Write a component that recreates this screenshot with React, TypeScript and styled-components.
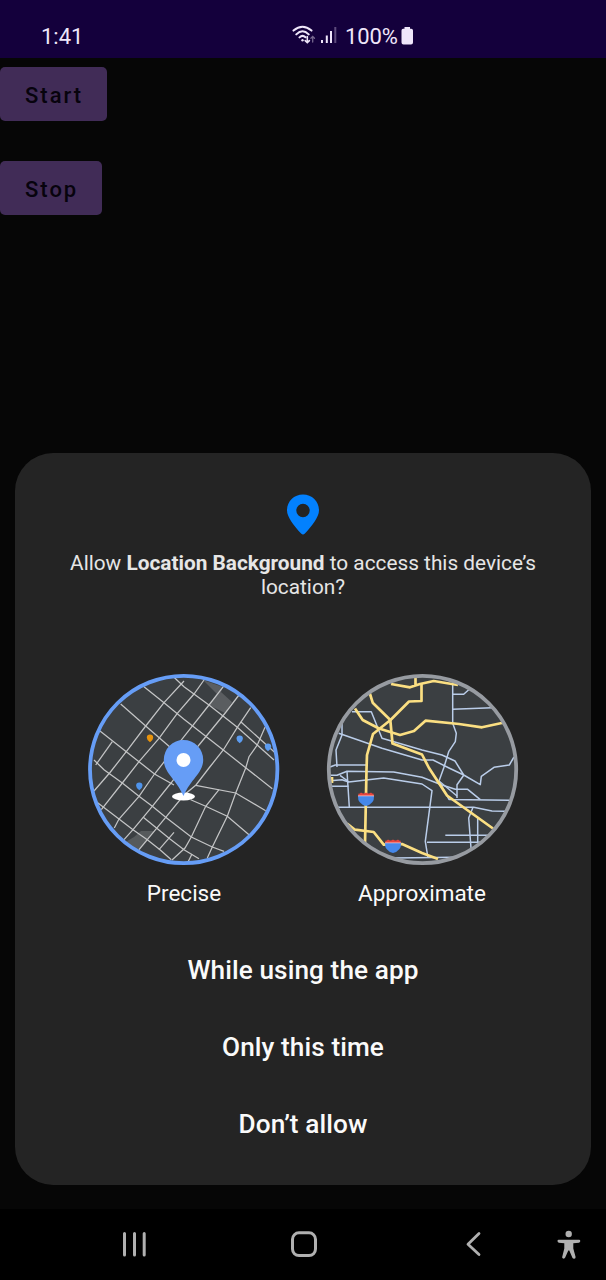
import React from 'react';
import styled, { createGlobalStyle } from 'styled-components';

const GlobalStyle = createGlobalStyle`
  * { box-sizing: border-box; }
  body { margin: 0; background: #060606; font-family: Roboto, "Liberation Sans", sans-serif; }
  svg { display: block; flex: none; }
`;

const Screen = styled.div`
  width: 606px;
  height: 1280px;
  display: flex;
  flex-direction: column;
  background: #060606;
  overflow: hidden;
`;

const StatusBar = styled.header`
  height: 58px;
  flex: none;
  display: flex;
  padding: 23px 0 0 41px;
  background: #14003c;
  color: #efe6fa;
  font-size: 22px;
  line-height: 27px;
`;

const Clock = styled.span`
  width: 251px;
`;

const StatusIcons = styled.div`
  display: flex;
  align-items: flex-start;
`;

const BatteryText = styled.span`
  margin: 0 1px 0 7px;
  width: 55px;
  letter-spacing: -0.1px;
`;

const AppArea = styled.main`
  height: 395px;
  flex: none;
  display: flex;
  flex-direction: column;
  align-items: flex-start;
  gap: 40px;
  padding-top: 9px;
`;

const AppButton = styled.button<{ $width: number }>`
  width: ${(p) => p.$width}px;
  height: 54px;
  padding: 4px 0 0 25px;
  border: 0;
  border-radius: 5px;
  background: #412c57;
  color: #07030d;
  font: 500 22px/30px Roboto, sans-serif;
  letter-spacing: 2px;
  text-align: left;
`;

const Sheet = styled.section`
  height: 732px;
  flex: none;
  margin: 0 15px;
  padding-top: 41px;
  border-radius: 38px;
  background: #242424;
  display: flex;
  flex-direction: column;
  align-items: center;
`;

const Message = styled.p`
  margin: 16px 0 0;
  width: 490px;
  height: 48px;
  color: #e6e6e6;
  font-size: 20.8px;
  line-height: 24px;
  text-align: center;
`;

const Choices = styled.div`
  display: flex;
  width: 438px;
  justify-content: space-between;
  margin-top: 71px;
`;

const Choice = styled.div`
  width: 200px;
  display: flex;
  flex-direction: column;
  align-items: center;
`;

const ChoiceLabel = styled.span`
  margin-top: 9px;
  color: #fafafa;
  font-size: 22.5px;
  line-height: 28px;
`;

const Actions = styled.div`
  display: flex;
  flex-direction: column;
  align-items: center;
  margin-top: 25px;
`;

const Action = styled.button`
  height: 77px;
  padding: 0 0 2px;
  border: 0;
  background: none;
  color: #fafafa;
  font: 500 26.2px/30px Roboto, sans-serif;
  letter-spacing: 0.08px;
`;

const NavBar = styled.nav`
  height: 71px;
  flex: none;
  margin-top: 24px;
  padding: 20px 24px 0 120px;
  display: flex;
  justify-content: space-between;
  background: #000;
`;

const WifiIcon = () => (
  <svg width="24" height="24" viewBox="0 0 24 24" fill="none" stroke="#efe6fa" strokeWidth="2" strokeLinecap="round">
    <path d="M1.500 7.600Q10.500 0 19.500 7.600M4.300 11.400Q10.500 5.200 16.700 11.400M7.500 14.400Q10.500 11.400 13.500 14.200" />
    <circle cx="10.500" cy="17.200" r="1.200" fill="#efe6fa" stroke="none" />
    <path d="M15.300 13.500v6M13.200 17.600l2.100 2.100 2.100-2.100" strokeWidth="1.600" />
    <path d="M20.700 19v-5.500M18.900 15.200l1.800-1.800 1.800 1.800" strokeWidth="1.300" stroke="#76668e" />
  </svg>
);

const SignalIcon = () => (
  <svg width="22" height="24" viewBox="0 0 22 24" fill="#efe6fa">
    <rect x="5" y="17" width="2" height="3" />
    <rect x="9.800" y="12.500" width="2" height="7.500" />
    <rect x="14" y="8" width="2" height="12" />
    <rect x="18.300" y="4" width="2" height="16" fill="#5d4b7c" />
  </svg>
);

const BatteryIcon = () => (
  <svg width="13" height="24" viewBox="0 0 13 24" fill="#efe6fa">
    <path d="M3.500 4h5.500v1.700h1.300q1.700 0 1.700 1.800v12q0 2-2 2H2.500q-2 0-2-2v-12q0-1.800 1.700-1.800h1.300z" />
  </svg>
);

const LocationIcon = () => (
  <svg width="32" height="41" viewBox="0 0 32 41">
    <path
      fill="#0381fe"
      fillRule="evenodd"
      d="M16 .5C7 .5 0 7.400 0 16.200c0 6.900 6.400 14.600 14.100 23.400q1.900 1.800 3.800 0C25.600 30.800 32 23.100 32 16.200 32 7.400 25 .5 16 .5zm0 9.300a6.700 6.700 0 1 1 0 13.400 6.700 6.700 0 0 1 0-13.400z"
    />
  </svg>
);

const streets = [
  'M36.700 34L61.700 56 87 78',
  'M60 16.700L80 32.700 100 49.300 139.300 80 162 98 188.300 118.700',
  'M90 7.300L100 16.700 125 35 153.300 57.300 190 90',
  'M156.700 51.700L191.700 83.300',
  'M16 61L42.300 81.700 55 91.700 70.500 104 90 115',
  'M10 90L20 99.700 38.300 113 55 126.300 68.300 136.300 81.700 147.300 107.300 167 128.300 177 140 181.300',
  'M11.700 131.300L35 149 49 159.700 63.300 169.700 76 179.700 87.300 189.700',
  'M59.300 147.300L86 169 100 179.700 115 188.700',
  'M106.700 129.700L121.700 136.300 143.300 146.300 165 164.700',
  'M111.700 115.300L151.700 123 181.700 140.700',
  'M100 11L80 32.700 61.700 56 42.300 81.700 26 102.500 10 121',
  'M28.300 71.700L11.700 95',
  'M120 10L110 24 93.300 43.300 75 68.300 55 91.700 38.300 113 17.300 139.700',
  'M139.300 16.700L125 35 100 66.700 70.500 104 55 126.300 35 149 30.300 158',
  'M155 25L142 42 115 75 87 113 68.300 136.300 49 159.700 40 169.700',
  'M166.700 37.700L153.300 57.300 139.300 80 125 98 112 115 100 125 81.700 147.300 63.300 169.700 55 179.700',
  'M181 57.300L173.300 75 165 86.700 161.700 98 151.700 123 143.300 146.300 128.300 177 123.300 188',
  'M135 119.700L121.700 136.300 107.300 167 101 178 88 190',
  'M90 162.300L75 179.700',
  'M108 184L104 192',
];

const MapPin = ({ x, y, color }: { x: number; y: number; color: string }) => (
  <path transform={`translate(${x} ${y})`} fill={color} d="M0-3.500a3.200 3.200 0 0 1 3.200 3.200Q3.200 2 0 4.300-3.200 2-3.200-.3A3.200 3.200 0 0 1 0-3.500z" />
);

const PreciseMap = () => (
  <svg width="200" height="200" viewBox="0 0 200 200">
    <clipPath id="preciseClip">
      <circle cx="99.700" cy="99.500" r="94" />
    </clipPath>
    <g clipPath="url(#preciseClip)">
      <rect width="200" height="200" fill="#3b3f42" />
      <path fill="#5a5d60" d="M119 10L139 17 137 22 148 32 141 43 125 35 133 24z" />
      <path fill="#565a5c" d="M40 173L50 167 57 161 70 161 64 170 55 181z" />
      <g fill="none" stroke="#c3c4c5" strokeWidth="1.250">
        {streets.map((d) => (
          <path key={d} d={d} />
        ))}
      </g>
      <MapPin x={66} y={68} color="#e8930c" />
      <MapPin x={155.7} y={69} color="#5c9cf0" />
      <MapPin x={184} y={77} color="#5c9cf0" />
      <MapPin x={55.3} y={116} color="#4f94ec" />
    </g>
    <circle cx="99.700" cy="99.500" r="93.700" fill="none" stroke="#669df6" strokeWidth="3.800" />
    <ellipse cx="99.500" cy="126.500" rx="11.500" ry="4" fill="#fff" />
    <path fill="#669df6" d="M99.500 70a19.700 19.700 0 0 1 19.700 19.700C119.200 103 107.500 108 99.500 126 91.500 108 79.800 103 79.800 89.700A19.700 19.700 0 0 1 99.500 70z" />
    <circle cx="99.500" cy="90" r="7" fill="#fff" />
  </svg>
);

const minorRoads = [
  'M30 41.700H49.300L60 68.300 100 80 120 85 133 91 141.700 105 158.300 114.700 159.300 106.300 172 97.300 187.300 95 192 87',
  'M16.700 63.300L60 78.300 100 90 111 90 127 98 141.700 105',
  'M20 53.300V65L14 80 15 97',
  'M8 97L13.300 95H44.300',
  'M8 105.300H15L25 101.300 71.700 102 100 107.300 120 115 133.300 119.300H145.700L158.300 129.700',
  'M8 110.700L20 109.700 26.700 112 61.700 108 100 114 110 120.700 103.300 171.300 106 188',
  'M18 105.300L27 112M25 101.300L27.300 137',
  'M9 116.300H26.500',
  'M14 137.300H151.700L170 141 183 141.300',
  'M105 172.300H160M123.300 165.300H167M71.700 188L131 187.300',
  'M151 137.300L146.700 148 149 178M155.700 148V172.500',
  'M117 111L127 129.500 187 130.300',
  'M130.700 12V53.300L134.300 63.300 133.300 71.700 126.700 81.700 121.700 98 117 111 135 126',
  'M130.700 24.300H141.700L147 19.500M130.700 39.300L170 37.700',
  'M141.700 105.300L135 114.700V128',
];

const highways = [
  'M69 14L88 17.300 98 14 111.700 11 136 15M93.500 6V16',
  'M99.500 14V31L87 31.500 68.500 50 51 64 45 85 44.500 100 43 174',
  'M47.700 23L50.700 32.700 68.300 50 70.500 73.500 100 84.500 107 98 125 125.500 171 158.500',
  'M33 38.500L40.700 50 57 58.500 78 65 92 61 103.500 50.700 137 54 160 57.300 181 52.700',
  'M25 153.500L33 159.700 51.700 162 61.700 174.700 80 174 100 183 116 189',
  'M10 107V113',
];

const Shield = ({ x, y }: { x: number; y: number }) => (
  <g transform={`translate(${x} ${y})`}>
    <path fill="#e8453c" d="M-7.500-5.500Q-6-5-5-6.500-2.500-4.500 0-6.500 2.500-4.500 5-6.500 6-5 7.500-5.500L8-2.500H-8z" />
    <path fill="#eec6cd" d="M-8-3.500H8V-2H-8z" />
    <path fill="#4588ea" d="M-8-2.800H8Q8.500 4.500 0 7-8.500 4.500-8-2.800z" />
  </g>
);

const ApproximateMap = () => (
  <svg width="200" height="200" viewBox="0 0 200 200">
    <clipPath id="approximateClip">
      <circle cx="100.500" cy="99.500" r="94" />
    </clipPath>
    <g clipPath="url(#approximateClip)">
      <rect width="200" height="200" fill="#3b3f42" />
      <g fill="none" stroke="#bacde9" strokeWidth="1.500" strokeLinejoin="round">
        {minorRoads.map((d) => (
          <path key={d} d={d} />
        ))}
      </g>
      <g fill="none" stroke="#fbdf82" strokeWidth="2.700" strokeLinejoin="round">
        {highways.map((d) => (
          <path key={d} d={d} />
        ))}
      </g>
      <Shield x={44} y={129} />
      <Shield x={71} y={176} />
    </g>
    <circle cx="100.500" cy="99.500" r="93.700" fill="none" stroke="#979ba1" strokeWidth="3.800" />
  </svg>
);

const RecentsIcon = () => (
  <svg width="30" height="30" viewBox="0 0 30 30" stroke="#b0b0b0" strokeWidth="3" strokeLinecap="round">
    <path d="M4.500 4.500V26M14.500 4.500V26M24.200 4.500V26" />
  </svg>
);

const HomeIcon = () => (
  <svg width="30" height="30" viewBox="0 0 30 30">
    <rect x="3.500" y="3.800" width="23" height="22.800" rx="6.500" fill="none" stroke="#b0b0b0" strokeWidth="3" />
  </svg>
);

const BackIcon = () => (
  <svg width="30" height="30" viewBox="0 0 30 30" fill="none" stroke="#b0b0b0" strokeWidth="2.800" strokeLinecap="round" strokeLinejoin="round">
    <path d="M20 4.500L9 15.300 20 25.500" />
  </svg>
);

const AccessibilityIcon = () => (
  <svg width="26" height="32" viewBox="0 0 26 32" fill="#b0b0b0">
    <circle cx="12.700" cy="5" r="3.200" />
    <path d="M2.800 10.800H23q1.300 0 1.300 1.300T23 13.700L17.300 14.300V19.500L19.600 28q.1 1.500-1.300 1.700-1.400.1-1.900-1L13.300 21.500h-1L9.200 28.600q-.6 1.200-1.900 1-1.400-.3-1.100-1.600L8.300 19.500V14.300L2.800 13.700Q1.500 13.500 1.500 12.100T2.800 10.800z" />
  </svg>
);

const NavSlot = styled.div<{ $width: number }>`
  width: ${(p) => p.$width}px;
`;

export default function App() {
  return (
    <Screen>
      <GlobalStyle />
      <StatusBar>
        <Clock>1:41</Clock>
        <StatusIcons>
          <WifiIcon />
          <SignalIcon />
          <BatteryText>100%</BatteryText>
          <BatteryIcon />
        </StatusIcons>
      </StatusBar>
      <AppArea>
        <AppButton $width={107}>Start</AppButton>
        <AppButton $width={102}>Stop</AppButton>
      </AppArea>
      <Sheet>
        <LocationIcon />
        <Message>
          Allow <b>Location Background</b> to access this device’s location?
        </Message>
        <Choices>
          <Choice>
            <PreciseMap />
            <ChoiceLabel>Precise</ChoiceLabel>
          </Choice>
          <Choice>
            <ApproximateMap />
            <ChoiceLabel>Approximate</ChoiceLabel>
          </Choice>
        </Choices>
        <Actions>
          <Action>While using the app</Action>
          <Action>Only this time</Action>
          <Action>Don’t allow</Action>
        </Actions>
      </Sheet>
      <NavBar>
        <NavSlot $width={169}><RecentsIcon /></NavSlot>
        <NavSlot $width={170}><HomeIcon /></NavSlot>
        <NavSlot $width={97}><BackIcon /></NavSlot>
        <AccessibilityIcon />
      </NavBar>
    </Screen>
  );
}
